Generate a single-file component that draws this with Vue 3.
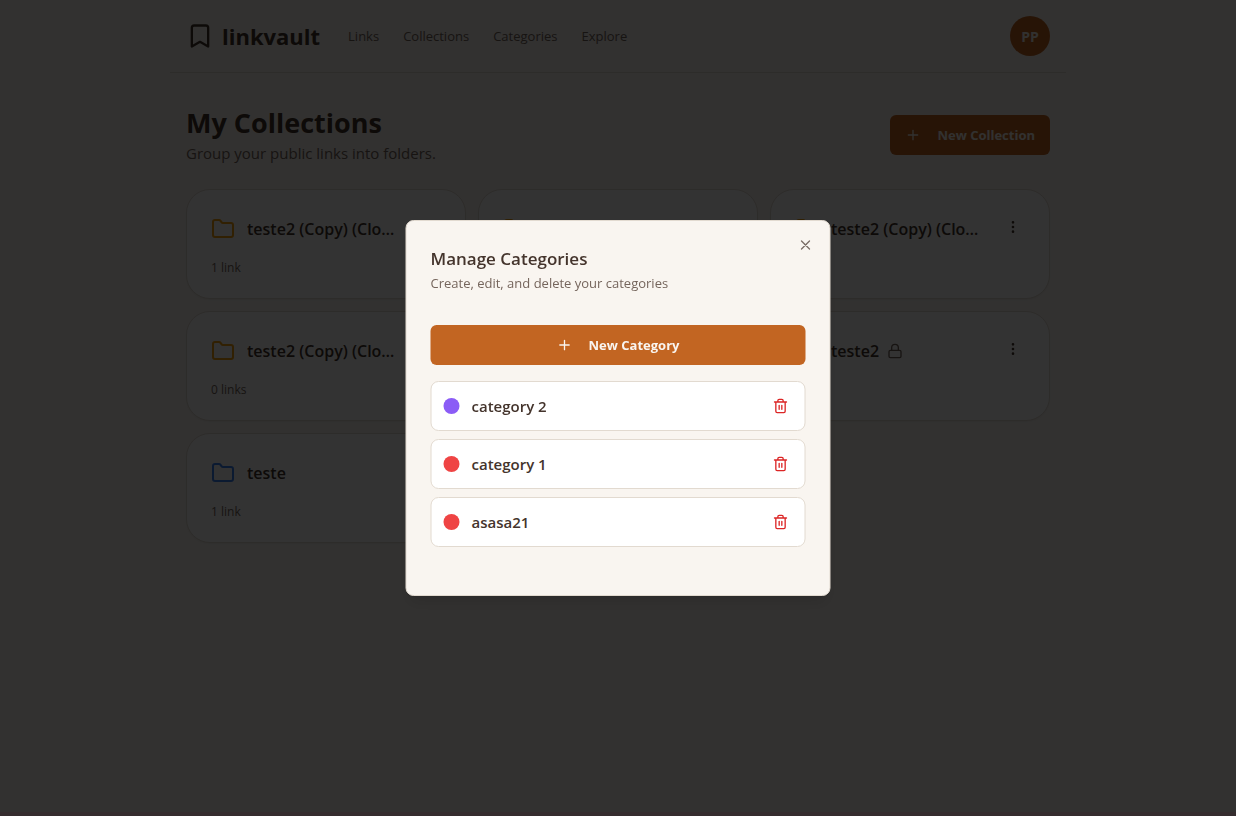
<script setup>
const navItems = ['Links', 'Collections', 'Categories', 'Explore']

const collections = [
  { id: 1, name: 'teste2 (Copy) (Clone)', count: '1 link', tone: 'amber' },
  { id: 2, name: '', count: '', tone: 'amber' },
  { id: 3, name: 'teste2 (Copy) (Clone)', count: '', tone: 'amber' },
  { id: 4, name: 'teste2 (Copy) (Clone)', count: '0 links', tone: 'amber' },
  { id: 5, name: '', count: '', tone: 'amber' },
  { id: 6, name: 'teste2', count: '', tone: 'amber', locked: true },
  { id: 7, name: 'teste', count: '1 link', tone: 'blue' },
]

const categories = [
  { id: 1, name: 'category 2', tone: 'violet' },
  { id: 2, name: 'category 1', tone: 'red' },
  { id: 3, name: 'asasa21', tone: 'red' },
]
</script>

<template>
  <div class="page">
    <header class="topbar">
      <a class="brand" href="#">
        <svg class="icon icon-28" viewBox="0 0 24 24" aria-hidden="true">
          <path d="m19 21-7-4-7 4V5a2 2 0 0 1 2-2h10a2 2 0 0 1 2 2v16z" />
        </svg>
        <span>linkvault</span>
      </a>
      <nav class="nav">
        <a v-for="item in navItems" :key="item" href="#">{{ item }}</a>
      </nav>
      <button class="avatar" type="button">PP</button>
    </header>

    <main class="main">
      <div class="heading">
        <div>
          <h1>My Collections</h1>
          <p>Group your public links into folders.</p>
        </div>
        <button class="primary" type="button">
          <svg class="icon icon-16" viewBox="0 0 24 24" aria-hidden="true"><path d="M5 12h14M12 5v14" /></svg>
          New Collection
        </button>
      </div>

      <div class="grid">
        <article v-for="c in collections" :key="c.id" class="card">
          <div class="card-top">
            <svg class="icon icon-24" :class="c.tone" viewBox="0 0 24 24" aria-hidden="true">
              <path d="M20 20a2 2 0 0 0 2-2V8a2 2 0 0 0-2-2h-7.9a2 2 0 0 1-1.69-.9L9.6 3.9A2 2 0 0 0 7.93 3H4a2 2 0 0 0-2 2v13a2 2 0 0 0 2 2Z" />
            </svg>
            <div class="card-title">
              <h2>{{ c.name }}</h2>
              <svg v-if="c.locked" class="icon icon-16 muted" viewBox="0 0 24 24" aria-hidden="true">
                <rect x="3" y="11" width="18" height="11" rx="2" />
                <path d="M7 11V7a5 5 0 0 1 10 0v4" />
              </svg>
            </div>
            <button class="more" type="button" aria-label="Collection options">
              <svg class="icon icon-16" viewBox="0 0 24 24" aria-hidden="true">
                <circle cx="12" cy="12" r="1" /><circle cx="12" cy="5" r="1" /><circle cx="12" cy="19" r="1" />
              </svg>
            </button>
          </div>
          <p class="count">{{ c.count }}</p>
        </article>
      </div>
    </main>
  </div>

  <div class="overlay">
    <section class="dialog" role="dialog" aria-modal="true" aria-labelledby="dialog-title">
      <button class="close" type="button" aria-label="Close">
        <svg class="icon icon-16" viewBox="0 0 24 24" aria-hidden="true"><path d="M18 6 6 18M6 6l12 12" /></svg>
      </button>
      <h2 id="dialog-title">Manage Categories</h2>
      <p class="description">Create, edit, and delete your categories</p>
      <button class="primary wide" type="button">
        <svg class="icon icon-16" viewBox="0 0 24 24" aria-hidden="true"><path d="M5 12h14M12 5v14" /></svg>
        New Category
      </button>
      <ul class="categories">
        <li v-for="c in categories" :key="c.id">
          <span class="dot" :class="c.tone"></span>
          <span class="name">{{ c.name }}</span>
          <button class="delete" type="button" :aria-label="'Delete ' + c.name">
            <svg class="icon icon-16" viewBox="0 0 24 24" aria-hidden="true">
              <path d="M3 6h18M19 6v14a2 2 0 0 1-2 2H7a2 2 0 0 1-2-2V6M8 6V4a2 2 0 0 1 2-2h4a2 2 0 0 1 2 2v2M10 11v6M14 11v6" />
            </svg>
          </button>
        </li>
      </ul>
    </section>
  </div>
</template>

<style>
body {
  margin: 0;
  background: #f9f5f0;
}
</style>

<style scoped>
.page,
.overlay {
  font-family: "Segoe UI", "Open Sans", "Noto Sans", sans-serif;
  color: #44342c;
}
.page {
  max-width: 896px;
  min-height: 100vh;
  margin: 0 auto;
}
h1, h2, p, ul {
  margin: 0;
  padding: 0;
}
a {
  color: inherit;
  text-decoration: none;
}
button {
  font: inherit;
  color: inherit;
  border: 0;
  padding: 0;
  background: none;
  display: flex;
  align-items: center;
  justify-content: center;
}
.icon {
  flex: none;
  fill: none;
  stroke: currentColor;
  stroke-width: 2;
  stroke-linecap: round;
  stroke-linejoin: round;
}
.icon-16 { width: 16px; height: 16px; }
.icon-24 { width: 24px; height: 24px; }
.icon-28 { width: 28px; height: 28px; }

.topbar {
  display: flex;
  align-items: center;
  padding: 16px;
  border-bottom: 1px solid #e2dad0;
}
.brand {
  display: flex;
  align-items: center;
  gap: 8px;
  font-size: 22px;
  line-height: 32px;
  font-weight: 700;
}
.nav {
  display: flex;
  gap: 24px;
  margin-left: 28px;
  font-size: 13px;
  line-height: 20px;
  color: #75655c;
}
.avatar {
  width: 40px;
  height: 40px;
  margin-left: auto;
  border-radius: 50%;
  background: #c26522;
  color: #f9f5f0;
  font-size: 14px;
  font-weight: 700;
}
.main {
  padding: 32px 16px;
}
.heading {
  display: flex;
  align-items: center;
  justify-content: space-between;
  margin-bottom: 24px;
}
h1 {
  font-size: 27px;
  line-height: 36px;
  font-weight: 700;
}
.heading p {
  font-size: 15px;
  line-height: 24px;
  color: #75655c;
}
.primary {
  gap: 16px;
  min-height: 40px;
  padding: 0 15px;
  border-radius: 6px;
  background: #c26522;
  color: #f9f5f0;
  font-size: 13px;
  line-height: 20px;
  font-weight: 700;
}
.grid {
  display: grid;
  grid-template-columns: repeat(3, minmax(0, 1fr));
  gap: 12px;
}
.card {
  padding: 24px 24px 22px;
  border: 1px solid #e2dad0;
  border-radius: 24px;
  background: #fff;
  box-shadow: 0 1px 2px rgba(0, 0, 0, 0.05);
}
.card-top {
  display: flex;
  align-items: center;
  gap: 12px;
}
.card-title {
  display: flex;
  flex: 1;
  align-items: center;
  gap: 8px;
  min-width: 0;
  padding-right: 4px;
}
.card-title h2 {
  overflow: hidden;
  min-height: 30px;
  text-overflow: ellipsis;
  white-space: nowrap;
  font-size: 16px;
  line-height: 30px;
  font-weight: 600;
}
.more {
  align-self: flex-start;
  width: 24px;
  height: 26px;
}
.muted { color: #75655c; }
.icon.amber { color: #f59e0b; }
.icon.blue { color: #3b82f6; }
.count {
  min-height: 16px;
  margin-top: 16px;
  font-size: 12px;
  line-height: 16px;
  color: #75655c;
}

.overlay {
  position: fixed;
  inset: 0;
  background: rgba(0, 0, 0, 0.8);
}
.overlay::after {
  content: "";
  position: absolute;
  inset: auto 0 0;
  height: 4px;
  background: #352c2e;
}
.dialog {
  position: absolute;
  top: 50%;
  left: 50%;
  transform: translate(-50%, -50%);
  box-sizing: border-box;
  width: 100%;
  max-width: 425px;
  padding: 24px 24px 48px;
  border: 1px solid #e2dad0;
  border-radius: 8px;
  background: #f9f5f0;
  box-shadow: 0 10px 15px -3px rgba(0, 0, 0, 0.1), 0 4px 6px -4px rgba(0, 0, 0, 0.1);
}
.close {
  position: absolute;
  top: 16px;
  right: 16px;
  opacity: 0.7;
}
.dialog h2 {
  font-size: 17px;
  line-height: 28px;
  font-weight: 600;
}
.description {
  font-size: 13px;
  line-height: 20px;
  color: #75655c;
}
.wide {
  width: 100%;
  margin: 32px 0 16px;
}
.categories {
  display: grid;
  gap: 8px;
  list-style: none;
}
.categories li {
  display: flex;
  align-items: center;
  gap: 12px;
  padding: 12px;
  border: 1px solid #e2dad0;
  border-radius: 8px;
  background: #fff;
}
.dot {
  width: 16px;
  height: 16px;
  border-radius: 50%;
}
.dot.violet { background: #8b5cf6; }
.dot.red { background: #ef4444; }
.name {
  flex: 1;
  font-size: 15px;
  line-height: 24px;
  font-weight: 600;
}
.delete {
  width: 24px;
  height: 24px;
  color: #dc2626;
}
</style>
